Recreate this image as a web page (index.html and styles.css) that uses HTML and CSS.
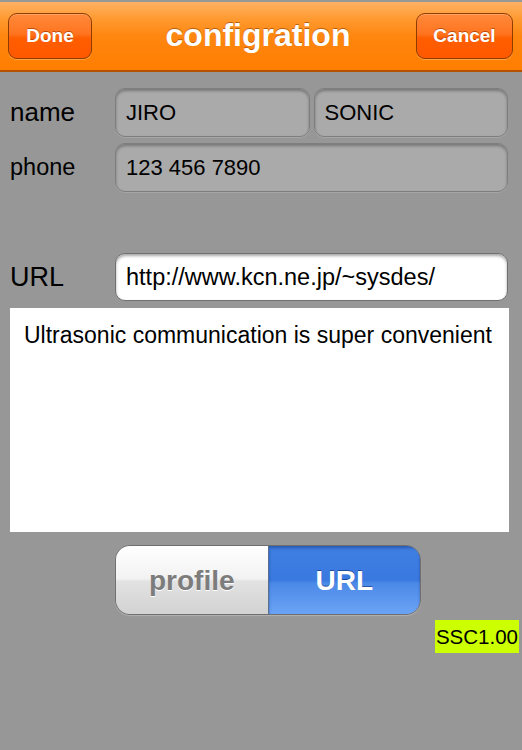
FILE: index.html
```html
<!DOCTYPE html>
<html>
<head>
<meta charset="utf-8">
<link rel="stylesheet" href="styles.css">
</head>
<body>
<div class="screen">
  <header class="navbar">
    <button class="nav-btn done">Done</button>
    <h1 class="title">configration</h1>
    <button class="nav-btn cancel">Cancel</button>
  </header>

  <section class="form">
    <div class="row row-name">
      <label class="label label-name">name</label>
      <div class="fields">
        <div class="field field-gray">JIRO</div>
        <div class="field field-gray">SONIC</div>
      </div>
    </div>
    <div class="row row-phone">
      <label class="label label-phone">phone</label>
      <div class="fields">
        <div class="field field-gray">123 456 7890</div>
      </div>
    </div>
    <div class="row row-url">
      <label class="label label-url">URL</label>
      <div class="fields">
        <div class="field field-white">http://www.kcn.ne.jp/~sysdes/</div>
      </div>
    </div>
  </section>

  <div class="message">Ultrasonic communication is super convenient</div>

  <div class="segment-row">
    <div class="segmented">
      <div class="seg seg-off">profile</div>
      <div class="seg seg-on">URL</div>
    </div>
  </div>

  <div class="version-row">
    <span class="version">SSC1.00</span>
  </div>
</div>
</body>
</html>
```

FILE: styles.css
```css
html, body {
  margin: 0;
  padding: 0;
  background: #979797;
}

.screen {
  width: 522px;
  height: 750px;
  padding-top: 2px;
  box-sizing: border-box;
  background: #979797;
  font-family: "Liberation Sans", Arial, Helvetica, sans-serif;
  color: #000;
  overflow: hidden;
}

.navbar {
  height: 70px;
  box-sizing: border-box;
  display: grid;
  grid-template-columns: 1fr auto 1fr;
  align-items: center;
  padding: 0 9px 1px 8px;
  background: linear-gradient(#ffb164 0%, #ff9a30 25%, #ff8610 50%, #ff7e00 100%);
  border-bottom: 2px solid #b55200;
}

.nav-btn {
  height: 46px;
  border-radius: 9px;
  border: 1px solid #8e3c00;
  background: linear-gradient(#ff8a3a 0%, #ff7420 45%, #ff5e00 55%, #ff5800 100%);
  box-shadow: inset 0 1px 0 rgba(255, 190, 140, 0.5), 0 1px 0 rgba(255, 200, 150, 0.45);
  color: #fff;
  font-family: "Liberation Sans", Arial, sans-serif;
  font-weight: bold;
  font-size: 19px;
  text-shadow: 0 -1px 0 rgba(120, 40, 0, 0.55);
  padding: 0;
  margin-top: 1px;
}

.done {
  width: 84px;
  justify-self: start;
}

.cancel {
  width: 97px;
  justify-self: end;
}

.title {
  margin: 0 0 0 -5px;
  font-size: 32px;
  font-weight: bold;
  color: #fff;
  text-shadow: 0 -1px 0 rgba(140, 60, 0, 0.6);
  letter-spacing: 0;
}

.form {
  display: flex;
  flex-direction: column;
  gap: 6px;
  padding: 16px 14px 0 10px;
}

.row {
  display: flex;
  align-items: center;
}

.row-url {
  margin-top: 55px;
}

.label {
  width: 105px;
  flex: none;
}

.label-name {
  font-size: 26px;
}

.label-phone {
  font-size: 23.5px;
}

.label-url {
  font-size: 27px;
}

.fields {
  flex: 1;
  display: flex;
  gap: 4px;
}

.field {
  flex: 1;
  height: 49px;
  box-sizing: border-box;
  border-radius: 10px;
  display: flex;
  align-items: center;
  padding-left: 10px;
  font-size: 22px;
}

.field-gray {
  background: #aaaaaa;
  border: 1px solid #7e7e7e;
  box-shadow: inset 0 2px 3px rgba(0, 0, 0, 0.3), 0 1px 0 rgba(255, 255, 255, 0.15);
}

.field-white {
  height: 48px;
  background: #ffffff;
  border: 1px solid #707070;
  box-shadow: inset 0 2px 3px rgba(0, 0, 0, 0.35);
  font-size: 23.5px;
}

.message {
  margin: 7px 13px 0 10px;
  height: 224px;
  box-sizing: border-box;
  background: #ffffff;
  padding: 14px 0 0 14px;
  font-size: 23px;
}

.segment-row {
  padding: 13px 0 0 115px;
}

.segmented {
  width: 306px;
  height: 70px;
  display: flex;
  border-radius: 15px;
  overflow: hidden;
  border: 1px solid #6f6f6f;
  box-sizing: border-box;
  box-shadow: 0 1px 1px rgba(255, 255, 255, 0.25);
}

.seg {
  flex: 1;
  display: flex;
  align-items: center;
  justify-content: center;
  font-size: 28px;
  font-weight: bold;
  padding-top: 2px;
}

.seg-off {
  background: linear-gradient(#ffffff 0%, #f2f2f2 48%, #e2e2e2 52%, #d2d2d2 100%);
  color: #7c7c7c;
  text-shadow: 0 1px 0 #ffffff;
  border-right: 1px solid #5d6f8a;
}

.seg-on {
  background: linear-gradient(#3f7fe2 0%, #3a79e0 50%, #4c8ae8 55%, #6ba3f5 100%);
  color: #ffffff;
  text-shadow: 0 -1px 0 rgba(0, 30, 90, 0.5);
  box-shadow: inset 0 2px 3px rgba(0, 20, 80, 0.35);
}

.version-row {
  display: flex;
  justify-content: flex-end;
  padding: 5px 3px 0 0;
}

.version {
  background: #ccff00;
  height: 33px;
  line-height: 33px;
  padding: 0 1px;
  font-size: 20.5px;
}
```
